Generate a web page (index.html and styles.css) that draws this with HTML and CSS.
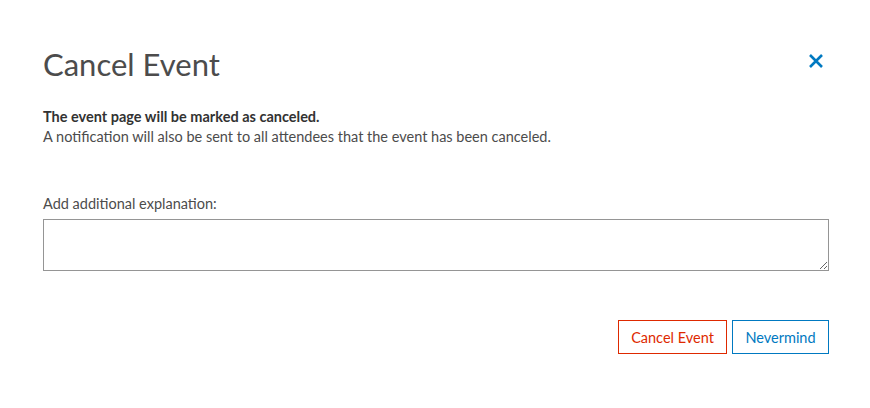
FILE: index.html
```html
<!DOCTYPE html>
<html lang="en">
<head>
<meta charset="utf-8">
<title>Cancel Event</title>
<link rel="stylesheet" href="styles.css">
</head>
<body>
<div class="modal">
  <header class="modal-header">
    <h1 class="modal-title">Cancel Event</h1>
    <button class="close-btn" aria-label="Close">
      <svg width="16" height="16" viewBox="0 0 16 16"><path d="M2 2L14 14M14 2L2 14" stroke="#0079c1" stroke-width="2.6" stroke-linecap="butt" fill="none"/></svg>
    </button>
  </header>
  <div class="modal-body">
    <p class="lead"><strong>The event page will be marked as canceled.</strong><br>A notification will also be sent to all attendees that the event has been canceled.</p>
    <label class="field-label" for="explain">Add additional explanation:</label>
    <textarea id="explain" class="field"></textarea>
  </div>
  <footer class="modal-footer">
    <button class="btn btn-danger">Cancel Event</button>
    <button class="btn btn-primary">Nevermind</button>
  </footer>
</div>
</body>
</html>
```
FILE: styles.css
```css
html, body { margin: 0; padding: 0; background: #fff; }
body { font-family: Lato, "Open Sans", sans-serif; color: #4c4c4c; }
.modal { width: 870px; height: 408px; box-sizing: border-box; padding: 41px 41px 0 43px; }
.modal-header { display: flex; justify-content: space-between; align-items: flex-start; }
.modal-title { margin: 0; font-weight: 400; font-size: 31px; line-height: 46px; color: #4c4c4c; }
.close-btn { background: none; border: 0; padding: 0; margin: 12px 5px 0 0; width: 16px; height: 16px; cursor: pointer; }
.close-btn svg { display: block; }
.modal-body { padding-top: 20px; }
.lead { margin: 0; font-size: 14.5px; line-height: 20px; color: #4c4c4c; }
.lead strong { font-weight: 700; color: #323232; }
.field-label { display: block; margin-top: 47px; font-size: 14.5px; line-height: 20px; color: #4c4c4c; }
.field { display: block; box-sizing: border-box; width: 100%; height: 52px; margin-top: 5px; border: 1px solid #959595; border-radius: 0; padding: 6px; font: inherit; resize: vertical; }
.modal-footer { display: flex; justify-content: flex-end; gap: 5px; margin-top: 49px; }
.btn { box-sizing: border-box; height: 34px; padding: 0 12px; background: #fff; font-family: inherit; font-size: 14.5px; cursor: pointer; }
.btn-danger { width: 109px; border: 1px solid #de2900; color: #de2900; }
.btn-primary { width: 97px; border: 1px solid #0079c1; color: #0079c1; }
```
